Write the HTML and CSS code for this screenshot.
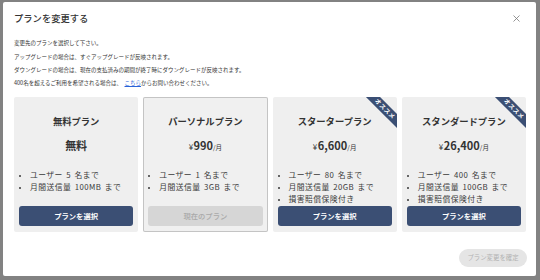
FILE: index.html
```html
<!DOCTYPE html>
<html lang="ja">
<head>
<meta charset="utf-8">
<title>プランを変更する</title>
<link rel="stylesheet" href="styles.css">
</head>
<body>
<div class="modal">
  <div class="modal-header">
    <h1 class="modal-title">プランを変更する</h1>
    <button class="close" aria-label="閉じる">
      <svg width="7" height="7" viewBox="0 0 7 7"><path d="M0.5 0.5 L6.5 6.5 M6.5 0.5 L0.5 6.5" stroke="#7a7a7a" stroke-width="0.8" fill="none"/></svg>
    </button>
  </div>
  <div class="desc">
    <p>変更先のプランを選択して下さい。</p>
    <p>アップグレードの場合は、すぐアップグレードが反映されます。</p>
    <p>ダウングレードの場合は、現在の支払済みの期間が終了時にダウングレードが反映されます。</p>
    <p>400名を超えるご利用を希望される場合は、<a class="link" href="#">こちら</a>からお問い合わせください。</p>
  </div>
  <div class="plans">
    <div class="plan">
      <div class="plan-name">無料プラン</div>
      <div class="plan-price"><span class="num">無料</span></div>
      <ul class="features">
        <li>ユーザー 5 名まで</li>
        <li>月間送信量 100MB まで</li>
      </ul>
      <button class="select">プランを選択</button>
    </div>
    <div class="plan current">
      <div class="plan-name">パーソナルプラン</div>
      <div class="plan-price"><span class="yen">¥</span><span class="num">990</span><span class="per">/月</span></div>
      <ul class="features">
        <li>ユーザー 1 名まで</li>
        <li>月間送信量 3GB まで</li>
      </ul>
      <button class="select disabled">現在のプラン</button>
    </div>
    <div class="plan">
      <div class="ribbon">オススメ</div>
      <div class="plan-name">スタータープラン</div>
      <div class="plan-price"><span class="yen">¥</span><span class="num">6,600</span><span class="per">/月</span></div>
      <ul class="features">
        <li>ユーザー 80 名まで</li>
        <li>月間送信量 20GB まで</li>
        <li>損害賠償保険付き</li>
      </ul>
      <button class="select">プランを選択</button>
    </div>
    <div class="plan">
      <div class="ribbon">オススメ</div>
      <div class="plan-name">スタンダードプラン</div>
      <div class="plan-price"><span class="yen">¥</span><span class="num">26,400</span><span class="per">/月</span></div>
      <ul class="features">
        <li>ユーザー 400 名まで</li>
        <li>月間送信量 100GB まで</li>
        <li>損害賠償保険付き</li>
      </ul>
      <button class="select">プランを選択</button>
    </div>
  </div>
  <div class="modal-footer">
    <button class="confirm">プラン変更を確定</button>
  </div>
</div>
</body>
</html>
```
FILE: styles.css
```css
* { box-sizing: border-box; }
html, body { margin: 0; padding: 0; }
body {
  background: #828282;
  font-family: "Noto Sans CJK JP", "Noto Sans", sans-serif;
  color: #333;
  width: 540px;
  height: 280px;
  overflow: hidden;
  padding: 2px 4px 0 3px;
}
.modal {
  background: #fff;
  height: 274px;
  border-radius: 2px;
  padding: 0 10px 0 11px;
  display: flex;
  flex-direction: column;
}
.modal-header {
  height: 32px;
  display: flex;
  align-items: center;
  justify-content: space-between;
}
.modal-title {
  margin: 0;
  font-size: 9.3px;
  font-weight: 500;
  line-height: 12px;
  color: #333;
}
.close {
  border: 0;
  background: none;
  padding: 0;
  margin-right: 6px;
  width: 7px;
  height: 7px;
  display: flex;
}
.desc {
  padding-top: 3.4px;
  font-size: 5.5px;
  line-height: 13.3px;
}
.desc p { margin: 0; white-space: nowrap; }
.link {
  color: #2a62d8;
  text-decoration: underline;
  margin-left: 2.5px;
}
.plans {
  margin-top: 6.4px;
  display: grid;
  grid-template-columns: repeat(4, 1fr);
  gap: 5px;
  height: 135px;
}
.plan {
  position: relative;
  overflow: hidden;
  background: #efefef;
  border-radius: 2px;
  display: flex;
  flex-direction: column;
  padding: 18px 5px 6px;
}
.plan.current {
  box-shadow: inset 0 0 0 1px #c4c4c4;
  background: #f0f0f0;
}
.plan-name {
  text-align: center;
  font-size: 9.3px;
  font-weight: 700;
  line-height: 12px;
  height: 12px;
}
.plan-price {
  margin-top: 12px;
  height: 12px;
  display: flex;
  justify-content: center;
  align-items: baseline;
  line-height: 12px;
  white-space: nowrap;
}
.plan-price .num { font-size: 11px; font-weight: 700; }
.plan-price .yen { font-size: 8px; font-weight: 400; margin-right: 0.5px; }
.plan-price .per { font-size: 6.5px; }
.features {
  margin: 18px 0 0;
  padding: 0 0 0 11px;
  font-size: 7.8px;
  line-height: 12px;
  letter-spacing: 0.45px;
  word-spacing: 1.2px;
  color: #3a3a3a;
  list-style: disc;
  white-space: nowrap;
}
.features li::marker { font-size: 6px; }
.select {
  margin-top: auto;
  height: 20px;
  flex: none;
  border: 0;
  border-radius: 3px;
  background: #3b4f74;
  color: #fff;
  font-family: inherit;
  font-size: 7.3px;
  font-weight: 700;
  padding: 0;
}
.select.disabled {
  background: #d6d6d6;
  color: #a9a9a9;
  font-weight: 500;
}
.ribbon {
  position: absolute;
  top: 7px;
  right: -18px;
  width: 60px;
  height: 10px;
  background: #3b4f74;
  color: #fff;
  font-size: 6px;
  font-weight: 700;
  line-height: 10px;
  text-align: center;
  letter-spacing: 0.4px;
  transform: rotate(45deg);
}
.modal-footer {
  padding-top: 17px;
  display: flex;
  justify-content: flex-end;
}
.confirm {
  height: 18px;
  width: 68px;
  margin-right: -1px;
  border: 0;
  border-radius: 9px;
  background: #e5e5e5;
  color: #b2b2b2;
  font-family: inherit;
  font-size: 6.4px;
  padding: 0;
}
```
